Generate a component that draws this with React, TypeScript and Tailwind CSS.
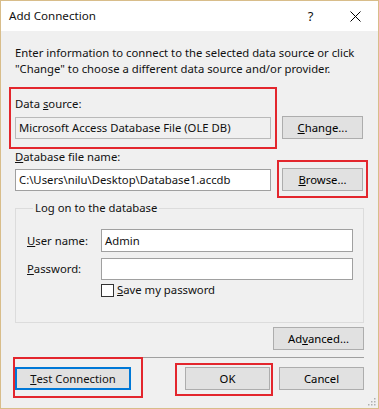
import React from "react";

const font = { fontFamily: '"Noto Sans", "Open Sans", sans-serif' };

function Btn({
  children,
  className = "",
}: {
  children: React.ReactNode;
  className?: string;
}) {
  return (
    <div
      className={
        "flex h-[23px] items-center justify-center border border-[#adadad] bg-[#e1e1e1] text-black " +
        className
      }
    >
      {children}
    </div>
  );
}

function Red({ className }: { className: string }) {
  return (
    <div
      className={"pointer-events-none absolute border-2 border-[#e3262d] " + className}
    />
  );
}

export default function App() {
  return (
    <div
      className="relative flex h-[409px] w-[379px] flex-col overflow-hidden whitespace-nowrap border border-[#d8bd8a] bg-[#f0f0f0] text-[11.3px] leading-[16px] text-[#111]"
      style={font}
    >
      {/* Title bar */}
      <div className="flex h-[30px] shrink-0 items-center bg-white">
        <div className="flex-1 pl-[8px] text-[11.6px]">Add Connection</div>
        <div className="flex h-full w-[45px] items-center justify-center text-[13px]">?</div>
        <div className="flex h-full w-[45px] items-center justify-center">
          <svg width="11" height="11" viewBox="0 0 11 11">
            <path d="M0.5 0.5 L10.5 10.5 M10.5 0.5 L0.5 10.5" stroke="#000" strokeWidth="1" />
          </svg>
        </div>
      </div>

      {/* Body */}
      <div className="flex flex-1 flex-col pl-[14px] pr-[14px] pt-[14px]">
        <p>
          Enter information to connect to the selected data source or click
          <br />
          "Change" to choose a different data source and/or provider.
        </p>

        {/* Data source */}
        <div className="mt-[19px] flex items-end gap-[11px]">
          <div className="relative flex w-[256px] flex-col">
            <div>
              Data <span className="underline">s</span>ource:
            </div>
            <div className="mt-[5px] flex h-[22px] items-center border border-[#b9b9b9] bg-[#f0f0f0] pl-[3px]">
              Microsoft Access Database File (OLE DB)
            </div>
            <Red className="-left-[6px] -right-[6px] -top-[9px] -bottom-[10px]" />
          </div>
          <Btn className="w-[81px]">
            <span className="underline">C</span>hange...
          </Btn>
        </div>

        {/* Database file name */}
        <div className="mt-[10px]">
          <span className="underline">D</span>atabase file name:
        </div>
        <div className="mt-[3px] flex items-center gap-[11px]">
          <div className="flex h-[22px] w-[256px] items-center border border-[#a0a0a0] bg-white pl-[3px]">
            C:\Users\nilu\Desktop\Database1.accdb
          </div>
          <div className="relative">
            <Btn className="w-[81px]">
              <span className="underline">B</span>rowse...
            </Btn>
            <Red className="-left-[5px] -right-[5px] -top-[8px] -bottom-[7px]" />
          </div>
        </div>

        {/* Log on group */}
        <fieldset className="mt-[9px] border border-[#dcdcdc] pb-[24px] pl-[11px] pr-[10px]">
          <legend className="ml-[6px] px-[2px]">Log on to the database</legend>
          <div className="mt-[13px] flex items-center">
            <div className="w-[74px]">
              <span className="underline">U</span>ser name:
            </div>
            <div className="flex h-[23px] flex-1 items-center border border-[#a0a0a0] bg-white pl-[3px]">
              Admin
            </div>
          </div>
          <div className="mt-[6px] flex items-center">
            <div className="w-[74px]">
              <span className="underline">P</span>assword:
            </div>
            <div className="h-[22px] flex-1 border border-[#a0a0a0] bg-white" />
          </div>
          <div className="mt-[2px] flex items-center pl-[74px]">
            <div className="h-[13px] w-[13px] border border-[#333] bg-white" />
            <div className="ml-[3px]">
              <span className="underline">S</span>ave my password
            </div>
          </div>
        </fieldset>

        <div className="mt-[4px] flex justify-end">
          <Btn className="w-[91px]">
            Ad<span className="underline">v</span>anced...
          </Btn>
        </div>

        <div className="mt-[7px] h-px bg-[#a0a0a0]" />

        <div className="mt-[9px] flex items-center">
          <div className="relative">
            <div className="flex h-[23px] w-[116px] items-center justify-center border-2 border-[#0078d7] bg-[#e1e1e1]">
              <span className="underline">T</span>est Connection
            </div>
            <Red className="-left-[2px] -right-[12px] -top-[10px] -bottom-[8px]" />
          </div>
          <div className="relative ml-auto">
            <Btn className="w-[85px]">OK</Btn>
            <Red className="-left-[10px] -right-[3px] -top-[4px] -bottom-[6px]" />
          </div>
          <Btn className="ml-[9px] w-[85px]">Cancel</Btn>
        </div>
      </div>

      {/* Resize grip */}
      <svg
        className="absolute bottom-[2px] right-[2px]"
        width="10"
        height="10"
        viewBox="0 0 10 10"
      >
        {[
          [8, 2],
          [5, 5],
          [8, 5],
          [2, 8],
          [5, 8],
          [8, 8],
        ].map(([x, y], i) => (
          <rect key={i} x={x} y={y} width="1.5" height="1.5" fill="#b0b0b0" />
        ))}
      </svg>
    </div>
  );
}
